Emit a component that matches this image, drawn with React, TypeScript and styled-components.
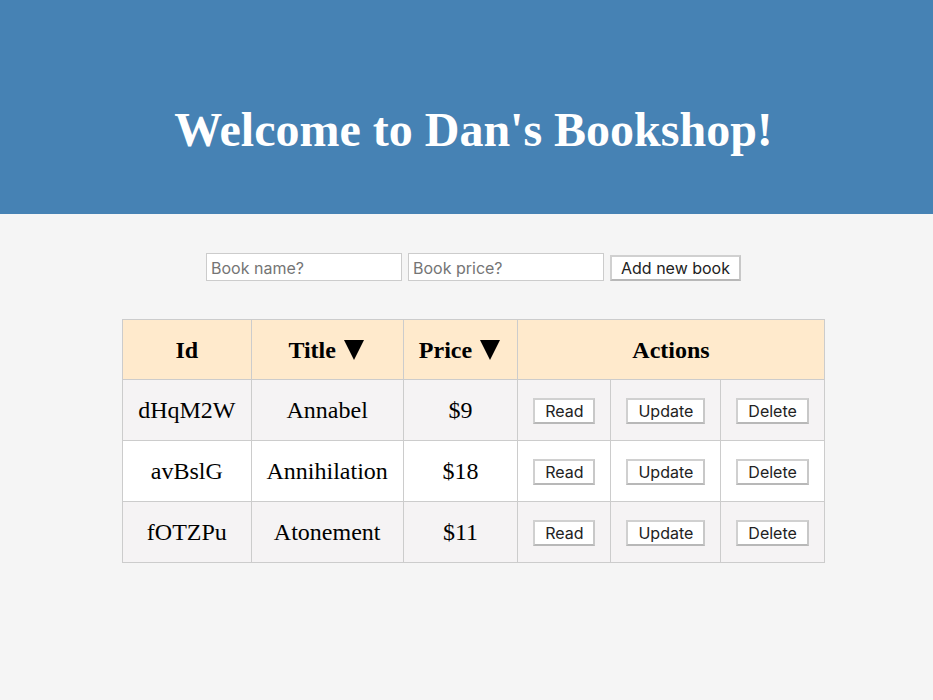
import React from "react";
import styled, { createGlobalStyle } from "styled-components";

const GlobalStyle = createGlobalStyle`
  body {
    margin: 0;
    background: #f5f5f5;
    color: #000;
    font-family: "Liberation Serif", "Times New Roman", serif;
    font-size: 24px;
  }
`;

const Header = styled.header`
  box-sizing: border-box;
  padding: 102px 12px 56px 26px;
  background: #4682b4;
  color: #fff;
  text-align: center;
`;

const Heading = styled.h1`
  margin: 0;
  font-size: 48px;
  line-height: 56px;
`;

const Content = styled.main`
  display: flex;
  flex-direction: column;
  align-items: center;
  gap: 38px;
  padding: 39px 12px 39px 26px;
`;

const BookForm = styled.form`
  display: flex;
  align-items: flex-end;
  gap: 6px;
`;

const Field = styled.input`
  box-sizing: border-box;
  width: 196px;
  height: 28px;
  margin: 0;
  padding: 3px 4px 1px;
  border: 1px solid #ccc;
  border-radius: 0;
  background: #fff;
  font-family: Inter, sans-serif;
  font-size: 16px;

  &::placeholder {
    color: #757575;
    opacity: 1;
  }
`;

const Button = styled.button`
  box-sizing: border-box;
  height: 26px;
  padding: 0 10px;
  border: 2px solid;
  border-color: #d0d0d0 #c8c8c8 #b8b8b8 #d0d0d0;
  border-radius: 0;
  background: #fff;
  color: #222;
  font-family: Inter, sans-serif;
  font-size: 16px;
  line-height: 22px;
  white-space: nowrap;
`;

const SubmitButton = styled(Button)`
  padding: 0 9px;
`;

const BookTable = styled.table`
  border-collapse: collapse;
  text-align: center;
`;

const Row = styled.tr`
  background: #fff;

  &:nth-child(odd) {
    background: #f5f3f4;
  }
`;

const HeadCell = styled.th`
  height: 29px;
  padding: 15px;
  border: 1px solid #ccc;
  background: #ffeacc;
  line-height: 28px;
`;

const Cell = styled.td`
  height: 30px;
  padding: 15px;
  border: 1px solid #ccc;
  line-height: 28px;
`;

const ActionCell = styled(Cell)`
  padding: 14px 15px 16px;
`;

const SortButton = styled.button`
  display: inline-flex;
  align-items: center;
  gap: 8px;
  padding: 0;
  border: 0;
  background: none;
  color: inherit;
  font: inherit;
`;

const SortArrow = () => (
  <svg width="22" height="20" viewBox="0 0 22 20" aria-hidden="true">
    <path d="M0 0H20L10 20Z" fill="#000" />
  </svg>
);

const books = [
  { id: "dHqM2W", title: "Annabel", price: 9 },
  { id: "avBslG", title: "Annihilation", price: 18 },
  { id: "fOTZPu", title: "Atonement", price: 11 },
];

const actions = ["Read", "Update", "Delete"];

export default function App() {
  return (
    <>
      <GlobalStyle />
      <Header>
        <Heading>Welcome to Dan's Bookshop!</Heading>
      </Header>
      <Content>
        <BookForm onSubmit={(event) => event.preventDefault()}>
          <Field type="text" placeholder="Book name?" aria-label="Book name" />
          <Field type="text" placeholder="Book price?" aria-label="Book price" />
          <SubmitButton type="submit">Add new book</SubmitButton>
        </BookForm>
        <BookTable>
          <thead>
            <tr>
              <HeadCell>Id</HeadCell>
              <HeadCell>
                <SortButton type="button">Title <SortArrow /></SortButton>
              </HeadCell>
              <HeadCell>
                <SortButton type="button">Price <SortArrow /></SortButton>
              </HeadCell>
              <HeadCell colSpan={3}>Actions</HeadCell>
            </tr>
          </thead>
          <tbody>
            {books.map((book) => (
              <Row key={book.id}>
                <Cell>{book.id}</Cell>
                <Cell>{book.title}</Cell>
                <Cell>${book.price}</Cell>
                {actions.map((action) => (
                  <ActionCell key={action}>
                    <Button type="button">{action}</Button>
                  </ActionCell>
                ))}
              </Row>
            ))}
          </tbody>
        </BookTable>
      </Content>
    </>
  );
}
